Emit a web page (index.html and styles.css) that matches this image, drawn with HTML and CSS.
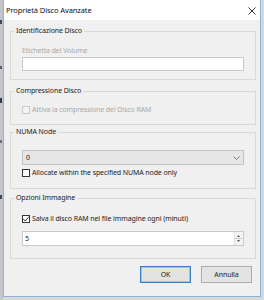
FILE: index.html
```html
<!DOCTYPE html>
<html lang="it">
<head>
  <meta charset="UTF-8" />
  <title>Proprietà Disco Avanzate</title>
  <link rel="stylesheet" href="styles.css">
</head>
<body>
  <div class="desk">
    <div class="window">
      <div class="titlebar">
        <span class="title">Proprietà Disco Avanzate</span>
        <svg class="close" width="8" height="8" viewBox="0 0 8 8">
          <path d="M0.5 0.5 L7.5 7.5 M7.5 0.5 L0.5 7.5" stroke="#333" stroke-width="1" fill="none"/>
        </svg>
      </div>

      <div class="content">
        <fieldset class="group g1">
          <legend>Identificazione Disco</legend>
          <div class="hint">Etichetta del Volume</div>
          <div class="input"></div>
        </fieldset>

        <fieldset class="group g2">
          <legend>Compressione Disco</legend>
          <div class="check disabled">
            <span class="box"></span>
            <span>Attiva la compressione del Disco RAM</span>
          </div>
        </fieldset>

        <fieldset class="group g3">
          <legend>NUMA Node</legend>
          <div class="combo">
            <span>0</span>
            <svg width="7" height="4" viewBox="0 0 7 4">
              <path d="M0.5 0.5 L3.5 3.5 L6.5 0.5" stroke="#777" stroke-width="1" fill="none"/>
            </svg>
          </div>
          <div class="check row3">
            <span class="box"></span>
            <span>Allocate within the specified NUMA node only</span>
          </div>
        </fieldset>

        <fieldset class="group g4">
          <legend>Opzioni Immagine</legend>
          <div class="check">
            <span class="box">
              <svg width="8" height="8" viewBox="0 0 8 8">
                <path d="M1.2 4 L3.2 6 L7 1.5" stroke="#333" stroke-width="1" fill="none"/>
              </svg>
            </span>
            <span>Salva il disco RAM nel file immagine ogni (minuti)</span>
          </div>
          <div class="input spin">
            <span>5</span>
            <span class="spinner">
              <svg width="7" height="13" viewBox="0 0 7 13">
                <path d="M2 5 L3.5 3 L5 5 Z M2 8 L3.5 10 L5 8 Z" fill="#555"/>
                <path d="M0 6.5 L7 6.5" stroke="#ccc" stroke-width="1"/>
              </svg>
            </span>
          </div>
        </fieldset>

        <div class="buttons">
          <button class="btn default">OK</button>
          <button class="btn">Annulla</button>
        </div>
      </div>
    </div>
  </div>
</body>
</html>
```

FILE: styles.css
```css
body { margin: 0; font-family: "Noto Sans", "Liberation Sans", sans-serif; font-size: 7px; letter-spacing: -0.1px; color: #222; }
.desk {
  display: flex;
  height: 300px;
  padding-left: 3px;
  background-color: #d6d8da;
  background-image:
    linear-gradient(#3a4a5c, #3a4a5c),
    linear-gradient(#55606c, #55606c),
    linear-gradient(#2c3a4a, #2c3a4a),
    linear-gradient(#667080, #667080),
    linear-gradient(#3a4a5c, #3a4a5c),
    linear-gradient(#c2c6ca, #c2c6ca);
  background-size: 2px 4px, 2px 3px, 2px 5px, 2px 3px, 2px 4px, 3px 300px;
  background-position: 0 20px, 0 66px, 0 98px, 0 140px, 0 195px, 0 0;
  background-repeat: no-repeat;
}
.window {
  width: 258px;
  height: 297px;
  box-sizing: border-box;
  border: 1px solid #8fb2d8;
  border-top: none;
  background: #f0f0f0;
  display: flex;
  flex-direction: column;
}
.titlebar {
  height: 20px;
  background: #fff;
  display: flex;
  align-items: center;
  justify-content: space-between;
  padding: 0 4px 0 2px;
}
.title { font-size: 7.5px; color: #111; }
.close { margin-top: 1px; }

.content { padding-top: 6px; }

.group {
  margin: 0 4px 0 6px;
  padding: 0 11px;
  border: 1px solid #d9d9d9;
  min-width: 0;
}
.group legend {
  line-height: 10px;
  padding: 0 2px;
  margin-left: -8px;
  color: #222;
}
.g1 { padding-bottom: 8px; }
.g2 { margin-top: 6px; padding-bottom: 9px; }
.g3 { margin-top: 2px; padding-bottom: 10px; }
.g4 { margin-top: 4px; padding-bottom: 12px; }

.hint { color: #a8a8a8; line-height: 10px; margin-top: 10px; }
.input {
  height: 14px;
  margin-top: 1px;
  background: #fff;
  border: 1px solid #c9c9c9;
  box-sizing: border-box;
}
.spin {
  height: 15px;
  margin-top: 7px;
  display: flex;
  align-items: center;
  justify-content: space-between;
  padding-left: 2px;
  color: #222;
}
.spinner { display: flex; width: 8px; height: 13px; background: #f4f4f4; border-left: 1px solid #e0e0e0; }

.check { display: flex; align-items: center; gap: 2px; line-height: 10px; height: 10px; margin-top: 11px; }
.g2 .check { margin-top: 9px; }
.check .box {
  width: 8px;
  height: 8px;
  box-sizing: border-box;
  border: 1px solid #333;
  background: #fff;
  display: flex;
}
.check .box svg { margin: -1px; }
.check.disabled { color: #a8a8a8; }
.check.disabled .box { border-color: #c8c8c8; background: #f4f4f4; }
.row3 { margin-top: 3px; }

.combo {
  height: 15px;
  margin-top: 13px;
  box-sizing: border-box;
  border: 1px solid #c4c4c4;
  background: #e6e6e6;
  display: flex;
  align-items: center;
  justify-content: space-between;
  padding: 0 3px 0 3px;
}

.buttons { display: flex; justify-content: flex-end; gap: 10px; margin: 7px 8px 0 0; }
.btn {
  width: 51px;
  height: 17px;
  padding: 0;
  font-family: inherit;
  font-size: 7px;
  letter-spacing: -0.1px;
  color: #222;
  background: #e3e3e3;
  border: 1px solid #adadad;
}
.btn.default { border-color: #3c7fc0; box-shadow: inset 0 0 0 1px #9cc3e8; }
```
